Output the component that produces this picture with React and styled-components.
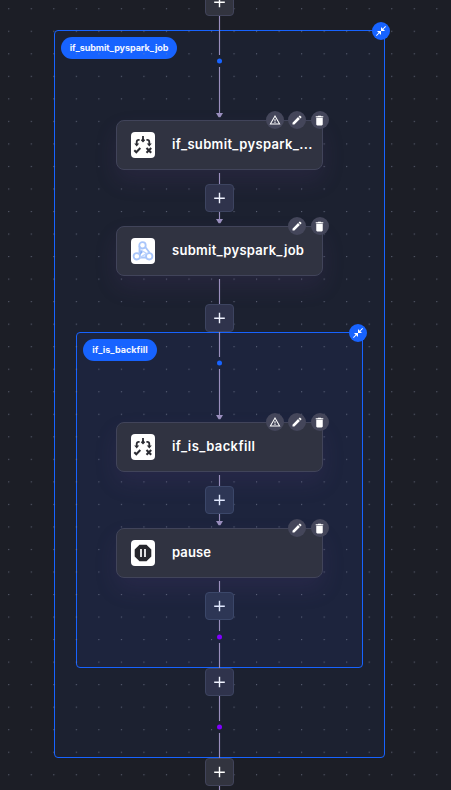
import React from "react";
import styled, { createGlobalStyle } from "styled-components";
import { MdEdit, MdDelete, MdWarningAmber, MdCloseFullscreen } from "react-icons/md";

const GlobalStyle = createGlobalStyle`
  *, *::before, *::after { box-sizing: border-box; }
  body { margin: 0; background: #1c1e26; font-family: "Inter", "Liberation Sans", sans-serif; }
`;

const Canvas = styled.main`
  position: relative;
  width: 451px;
  height: 790px;
  overflow: hidden;
  background: #1c1e26;
`;

const Layer = styled.svg`
  position: absolute;
  inset: 0;
  width: 451px;
  height: 790px;
  pointer-events: none;
`;

const Group = styled.section`
  position: absolute;
  left: ${(p) => p.$x}px;
  top: ${(p) => p.$y}px;
  width: ${(p) => p.$w}px;
  height: ${(p) => p.$h}px;
  border: 1px solid #1763ff;
  border-radius: 4px;
  background: ${(p) => p.$tint};
  pointer-events: none;
`;

const GroupLabel = styled.span`
  display: inline-flex;
  align-items: center;
  justify-content: center;
  width: ${(p) => p.$w}px;
  height: 22px;
  margin: 6px;
  padding-bottom: 1px;
  border-radius: 11px;
  background: #1763ff;
  color: #f2f5ff;
  font-size: 9px;
  font-weight: 700;
  letter-spacing: ${(p) => p.$spacing}px;
  white-space: nowrap;
`;

const CollapseButton = styled.button`
  position: absolute;
  top: -9px;
  right: ${(p) => p.$right}px;
  display: flex;
  align-items: center;
  justify-content: center;
  width: 18px;
  height: 18px;
  padding: 0;
  border: 0;
  border-radius: 50%;
  background: #1763ff;
  color: #fff;
`;

const Card = styled.article`
  position: absolute;
  left: 116px;
  top: ${(p) => p.$y}px;
  display: flex;
  align-items: center;
  gap: 17px;
  width: 207px;
  height: 50px;
  padding-left: 14px;
  border: 1px solid #41445a;
  border-radius: 8px;
  background: #303341;
  box-shadow: 0 11px 22px rgba(98, 70, 140, 0.15);
`;

const Logo = styled.span`
  display: flex;
  align-items: center;
  justify-content: center;
  width: 24px;
  height: 26px;
  border-radius: 4px;
  background: #fff;
`;

const Title = styled.span`
  padding-bottom: 2px;
  color: #fff;
  font-size: 13px;
  font-weight: 600;
  line-height: 18px;
  letter-spacing: ${(p) => p.$spacing}px;
  white-space: nowrap;
`;

const Actions = styled.div`
  position: absolute;
  top: -10px;
  right: -6.5px;
  display: flex;
  gap: 4.5px;
`;

const ActionButton = styled.button`
  display: flex;
  align-items: center;
  justify-content: center;
  width: 18px;
  height: 18px;
  padding: 0;
  border: 0;
  border-radius: 50%;
  background: #44465a;
  color: #fff;
`;

const AddButton = styled.button`
  position: absolute;
  left: 205px;
  top: ${(p) => p.$y}px;
  display: flex;
  align-items: center;
  justify-content: center;
  width: 29px;
  height: 28px;
  padding: 0;
  border: 1px solid ${(p) => TONES[p.$tone].border};
  border-radius: 4px;
  background: ${(p) => TONES[p.$tone].fill};
  color: ${(p) => TONES[p.$tone].icon};
`;

const TONES = {
  root: { fill: "#32343f", border: "#41445a", icon: "#fff" },
  outer: { fill: "#2f334c", border: "#3d4460", icon: "#f0f3ff" },
  inner: { fill: "#2d3655", border: "#3b4769", icon: "#e2e9ff" },
};

function BranchIcon() {
  return (
    <svg width="20" height="20" viewBox="0 0 20 20" fill="none" stroke="#2b2c33">
      <path d="M10 1v5M6.6 4.8H5.8Q3.7 4.8 3.7 7v2.2M13.4 4.8h.8Q16.3 4.8 16.3 7v2.2" strokeWidth="1.8" />
      <path d="M10 2.9 12.2 5.2 10 7.5 7.8 5.2ZM1.2 8.4h5L3.7 11.6ZM13.8 8.4h5L16.3 11.6Z" fill="#2b2c33" stroke="none" />
      <path d="m1.3 15.2 2 2 4-4.2" strokeWidth="2" />
      <path d="m13.5 13 4.7 4.7m0-4.7-4.7 4.7" strokeWidth="2.1" />
    </svg>
  );
}

function SparkJobIcon() {
  return (
    <svg width="22" height="22" viewBox="0 0 22 22" fill="none" stroke="#a9c6fb">
      <circle cx="10.5" cy="5.3" r="3.2" strokeWidth="1.8" />
      <circle cx="4.8" cy="16.3" r="3.2" strokeWidth="1.8" />
      <circle cx="17.2" cy="16.3" r="3.2" strokeWidth="1.8" />
      <path d="M7.5 6v7.2M8 17.5h6M13.3 7l4.3 5.7" strokeWidth="1.8" />
      <path d="m8 9.5 6.5 4-6.5 4" stroke="#bcd3fd" strokeWidth="1.4" />
      <path d="m8.4 10.3 2.5 1.6-3 3.3Z" fill="#86adf5" stroke="none" />
    </svg>
  );
}

function PauseIcon() {
  return (
    <svg width="18" height="18" viewBox="0 0 18 18">
      <path d="M5.5.7h7l4.8 4.8v7l-4.8 4.8h-7L.7 12.5v-7Z" fill="#26272d" />
      <path d="M7 5v8M11 5v8" stroke="#fff" strokeWidth="1.7" />
    </svg>
  );
}

function PlusIcon() {
  return (
    <svg width="11" height="12" viewBox="0 0 11 12" stroke="currentColor" strokeWidth="1.4">
      <path d="M5.5 .7v10.6M.2 6.2h10.6" />
    </svg>
  );
}

const cards = [
  { y: 120, title: "if_submit_pyspark_...", Icon: BranchIcon, warning: true, spacing: 0.34 },
  { y: 226, title: "submit_pyspark_job", Icon: SparkJobIcon, spacing: 0.27 },
  { y: 422, title: "if_is_backfill", Icon: BranchIcon, warning: true, spacing: 0.4 },
  { y: 528, title: "pause", Icon: PauseIcon, spacing: 0.1 },
];

const additions = [
  [-12, "root"], [184, "outer"], [304, "outer"], [486, "inner"],
  [592, "inner"], [668, "outer"], [758, "root"],
];

const segments = [
  [16, 55], [67, 114], [173, 184], [212, 220], [279, 304], [332, 357], [369, 416],
  [475, 486], [514, 522], [581, 592], [620, 631], [643, 668], [696, 721], [733, 758], [786, 790],
];

const joints = [[61, "#1763ff"], [363, "#1763ff"], [637, "#8000ff"], [727, "#8000ff"]];

function Frame({ label, labelWidth, spacing, collapseRight, ...box }) {
  return (
    <Group {...box}>
      <GroupLabel $w={labelWidth} $spacing={spacing}>{label}</GroupLabel>
      <CollapseButton $right={collapseRight} aria-label="Collapse group">
        <MdCloseFullscreen size={12} />
      </CollapseButton>
    </Group>
  );
}

export default function App() {
  return (
    <>
      <GlobalStyle />
      <Canvas>
        <Frame $x={54} $y={30} $w={331} $h={728} $tint="#1c2130" label="if_submit_pyspark_job" labelWidth={116} spacing={-0.05} collapseRight={-6} />
        <Frame $x={76} $y={332} $w={287} $h={336} $tint="#1d243d" label="if_is_backfill" labelWidth={74} spacing={0.05} collapseRight={-5} />
        <Layer>
          <defs>
            <pattern id="grid" x="8.2" y="8.2" width="22.53" height="22.53" patternUnits="userSpaceOnUse">
              <circle cx="0.6" cy="0.6" r="0.6" fill="#8389a0" opacity="0.75" />
            </pattern>
          </defs>
          <rect width="451" height="790" fill="url(#grid)" />
        </Layer>
        {cards.map(({ y, title, Icon, warning, spacing }) => (
          <Card key={y} $y={y}>
            <Logo><Icon /></Logo>
            <Title $spacing={spacing}>{title}</Title>
            <Actions>
              {warning && <ActionButton aria-label="Warnings"><MdWarningAmber size={12} /></ActionButton>}
              <ActionButton aria-label="Edit"><MdEdit size={12} /></ActionButton>
              <ActionButton aria-label="Delete"><MdDelete size={13} /></ActionButton>
            </Actions>
          </Card>
        ))}
        <Layer>
          {segments.map(([from, to]) => (
            <path key={from} d={`M219.5 ${from}V${to}`} stroke="#9a8fbe" strokeWidth="1.15" />
          ))}
          {[113, 219, 415, 521].map((y) => (
            <path key={y} d={`M216 ${y}h7l-2.6 4.3h-1.8Z`} fill="#9a8fbe" />
          ))}
          {joints.map(([y, fill]) => <circle key={y} cx="219.5" cy={y} r="2.5" fill={fill} />)}
        </Layer>
        {additions.map(([y, tone]) => (
          <AddButton key={y} $y={y} $tone={tone} aria-label="Add step"><PlusIcon /></AddButton>
        ))}
      </Canvas>
    </>
  );
}
